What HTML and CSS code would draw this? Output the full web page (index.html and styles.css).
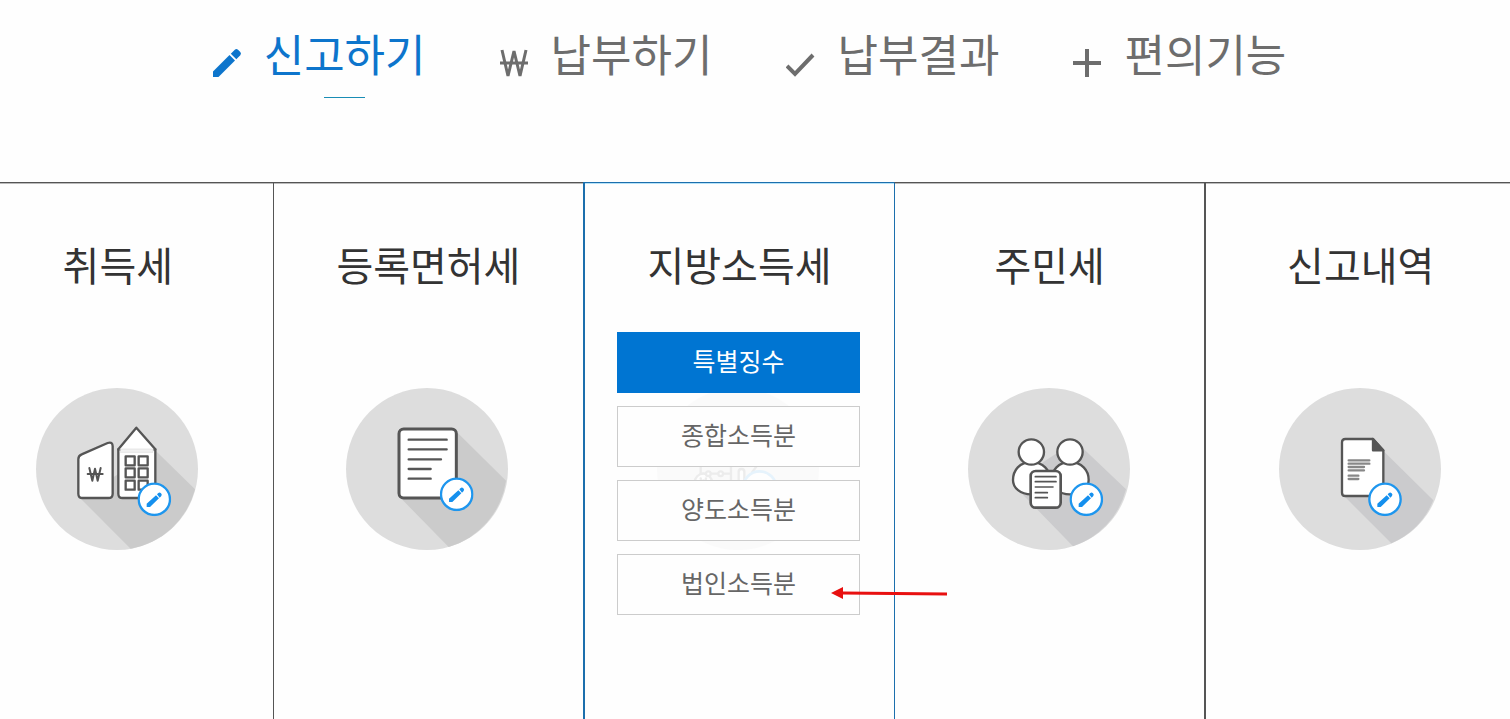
FILE: index.html
```
<!DOCTYPE html>
<html lang="ko">
<head>
    <meta charset="UTF-8">
    <title>신고하기</title>
    <link rel="stylesheet" href="styles.css">
</head>
<body>
    <!-- shared pencil shapes -->
    <svg class="defs" aria-hidden="true">
        <symbol id="pencil" viewBox="0 0 30 30">
            <path d="M1 23.500V29h5.500L23 12.500 17.500 7zM24.300 11.200l4-4q1.400-1.600 0-3.200l-2.300-2.300q-1.600-1.400-3.200 0l-4 4z"/>
        </symbol>
        <symbol id="badge" viewBox="0 0 102 102">
            <circle cx="51" cy="51" r="47" fill="#fff" stroke="#1e96ee" stroke-width="7"/>
            <path d="M28 74V64L56 39l9 9L38 74zM59 36l4-4q4-3 8 1t1 8l-5 5z" fill="#1590ee"/>
        </symbol>
    </svg>

    <ul id="navbar">
        <li class="on">
            <a href="#">
                <svg class="ico" viewBox="0 0 30 30"><use href="#pencil" fill="currentColor"/></svg>
                <span>신고하기</span>
            </a>
        </li>
        <li>
            <a href="#">
                <svg class="ico line" viewBox="0 0 30 30"><polyline points="3,2 9,28 15,3 21,28 27,2"/><path d="M1 15h28"/></svg>
                <span>납부하기</span>
            </a>
        </li>
        <li>
            <a href="#">
                <svg class="ico check" viewBox="0 0 30 30"><path d="M1 18l8 8L27 7"/></svg>
                <span>납부결과</span>
            </a>
        </li>
        <li>
            <a href="#">
                <svg class="ico check" viewBox="0 0 30 30"><path d="M1 15h28M15 1v28"/></svg>
                <span>편의기능</span>
            </a>
        </li>
    </ul>

    <div class="taxWrap">
    <div class="taxes">
        <div class="tax">
            <h2>취득세</h2>
            <div class="stack">
                <svg class="round" viewBox="48 24 486 486">
                    <circle cx="291" cy="267" r="243" fill="#ddd"/>
                    <path d="M407 212L525 328A243 243 0 0 1 332 506L180 354z" fill="#cbcbcb"/>
                    <g class="draw">
                        <path d="M175 238q0-11 10-15l78-34q15-5 15 10v142q0 13-13 13h-77q-13 0-13-13z"/>
                        <path d="M295 208h111v133q0 13-13 13h-85q-13 0-13-13z"/>
                        <path d="M295 208l54-65 57 65"/>
                        <path d="M302 207h97v10h-97z" fill="#f2f2f2" stroke="#ddd" stroke-width="2"/>
                        <path d="M317 229h27v27h-27zM356 229h27v27h-27zM317 265h27v27h-27zM356 265h27v27h-27zM317 302h27v27h-27zM356 302h27v27h-27z"/>
                        <path d="M208 264l9 38 8-36 8 36 9-38M203 282h45" fill="none" stroke-width="6"/>
                    </g>
                    <use href="#badge" x="352" y="307" width="102" height="102"/>
                </svg>
            </div>
        </div>
        <div class="tax">
            <h2>등록면허세</h2>
            <div class="stack">
                <svg class="round" viewBox="36 24 486 486">
                    <circle cx="279" cy="267" r="243" fill="#ddd"/>
                    <path d="M366 154L516 302A243 243 0 0 1 344 501L198 352z" fill="#cbcbcb"/>
                    <g class="draw">
                        <rect x="195" y="147" width="172" height="207" rx="14" stroke-width="9"/>
                        <path d="M224 179h114M224 208h114M224 238h97M224 267h66M224 296h66"/>
                    </g>
                    <use href="#badge" x="317" y="292" width="102" height="102"/>
                </svg>
            </div>
        </div>
        <div class="tax active">
            <h2>지방소득세</h2>
            <div class="stack">
                <svg class="round faded" viewBox="39 24 486 486">
                    <circle cx="282" cy="267" r="243" fill="#ddd"/>
                    <g class="draw">
                        <path d="M170 240v40M170 281h91M261 240v66"/>
                        <circle cx="178" cy="307" r="26"/>
                        <path d="M170 295l4 20 4-14 4 14 4-20" fill="none"/>
                        <circle cx="193" cy="281" r="7"/>
                        <circle cx="230" cy="281" r="7"/>
                        <rect x="284" y="267" width="17" height="70" rx="8"/>
                        <path d="M325 276l12-16"/>
                    </g>
                    <circle cx="347" cy="324" r="50" fill="#fff" stroke="#1e96ee" stroke-width="8"/>
                </svg>
                <ul class="submenu">
                    <li><a class="selected" href="#">특별징수</a></li>
                    <li><a href="#">종합소득분</a></li>
                    <li><a href="#">양도소득분</a></li>
                    <li>
                        <a href="#">법인소득분</a>
                        <svg class="arrow" viewBox="0 0 116 12"><path d="M11 4.500L116 5.500v3L11 7.500z"/><path d="M0 6L12 0v12z"/></svg>
                    </li>
                </ul>
            </div>
        </div>
        <div class="tax">
            <h2>주민세</h2>
            <div class="stack">
                <svg class="round" viewBox="39 24 486 486">
                    <circle cx="282" cy="267" r="243" fill="#ddd"/>
                    <path d="M265 246l46-30 72-12L513 328A243 243 0 0 1 354 499L190 330z" fill="#cbcbcd"/>
                    <g class="draw">
                        <path d="M229 246c-35 0-55 25-55 54 0 24 22 43 55 43s57-19 57-43c0-29-22-54-57-54z"/>
                        <path d="M345 246c-35 0-55 25-55 54 0 24 22 43 55 43s56-19 56-43c0-29-21-54-56-54z"/>
                        <circle cx="229" cy="216" r="38"/>
                        <circle cx="345" cy="216" r="38"/>
                        <rect x="227" y="273" width="90" height="110" rx="15" stroke-width="8"/>
                        <path d="M241 290h62M241 305h62M241 321h53M241 338h36M241 353h36" stroke-width="5"/>
                    </g>
                    <use href="#badge" x="343" y="307" width="102" height="102"/>
                </svg>
            </div>
        </div>
        <div class="tax">
            <h2>신고내역</h2>
            <div class="stack">
                <svg class="round" viewBox="39 24 486 486">
                    <circle cx="282" cy="267" r="243" fill="#ddd"/>
                    <path d="M353 214L502 361A243 243 0 0 1 376 490L232 346z" fill="#cbcbcd"/>
                    <g class="draw">
                        <path d="M238 177h83l31 35v136H238q-10 0-10-10V187q0-10 10-10z"/>
                        <path d="M321 177l31 34h-31z" fill="#555"/>
                        <path d="M248 241h62M248 251h62M248 261h46M248 271h46M248 287h29M248 297h29" stroke="#888"/>
                    </g>
                    <use href="#badge" x="306" y="307" width="102" height="102"/>
                </svg>
            </div>
        </div>
    </div>
    </div>
</body>
</html>
```

FILE: styles.css
```
body {
    margin: 0;
    min-height: 100vh;
    display: flex;
    flex-direction: column;
    background-color: #fefefe;
    font-family: "Noto Sans CJK KR", sans-serif;
}
a {
    color: inherit;
    text-decoration: none;
}
ul {
    margin: 0;
    padding: 0;
    list-style-type: none;
}
.defs {
    display: none;
}

/* top menu */
#navbar {
    height: 161px;
    padding-top: 21px;
    padding-right: 12px;
    display: flex;
    justify-content: center;
    gap: 73px;
    color: #6d6d6d;
    font-size: 44px;
    line-height: 64px;
}
#navbar a {
    display: flex;
    align-items: flex-start;
    gap: 22px;
}
#navbar .on { color: #0d75cc; }
#navbar .on span::after {
    content: "";
    display: block;
    width: 41px;
    height: 1px;
    margin: 12px auto 0;
    background-color: #1a8db5;
}
.ico {
    width: 30px;
    height: 30px;
    margin-top: 27px;
    fill: none;
}
.line {
    stroke: currentColor;
    stroke-width: 3;
}
.check {
    stroke: currentColor;
    stroke-width: 4;
}

/* tax columns, the outer ones run past the window */
.taxWrap {
    flex: 1;
    display: flex;
    overflow: hidden;
}
.taxes {
    flex: 1;
    display: grid;
    grid-template-columns: repeat(5, 1fr);
    margin-left: -38px;
    margin-right: -5px;
}
.tax {
    padding-top: 51px;
    border-top: 1px solid #555;
    border-left: 1px solid #555;
    box-shadow: inset 0 1px #bbb;
}
.tax:last-child { border-left-width: 2px; }
.tax.active {
    border-color: #1c6fad;
    border-left-width: 2px;
    box-shadow: inset 0 1px #b5e2f8;
}
.active + .tax { border-left-color: #1c6fad; }
.tax h2 {
    margin: 0 0 38px;
    color: #333;
    font-size: 40px;
    font-weight: normal;
    line-height: 60px;
    text-align: center;
}
.stack {
    display: grid;
    justify-items: center;
    padding-right: 2px;
}
.round, .submenu { grid-area: 1 / 1; }
.round {
    width: 162px;
    height: 162px;
    margin-top: 56px;
}
.faded { opacity: 0.1; }
.draw {
    fill: #fff;
    stroke: #555;
    stroke-width: 7;
    stroke-linecap: round;
    stroke-linejoin: round;
}

.submenu {
    z-index: 1;
    width: 243px;
    display: grid;
    gap: 13px;
}
.submenu li { position: relative; }
.submenu a {
    display: block;
    padding-bottom: 4px;
    border: 1px solid #ccc;
    background-color: #fefefe;
    color: #666;
    font-size: 25px;
    line-height: 55px;
    text-align: center;
}
.submenu .selected {
    border-color: #0075d2;
    background-color: #0075d2;
    color: #fff;
}
.arrow {
    position: absolute;
    top: 33px;
    left: 214px;
    width: 116px;
    height: 12px;
    fill: #e81010;
}
```
